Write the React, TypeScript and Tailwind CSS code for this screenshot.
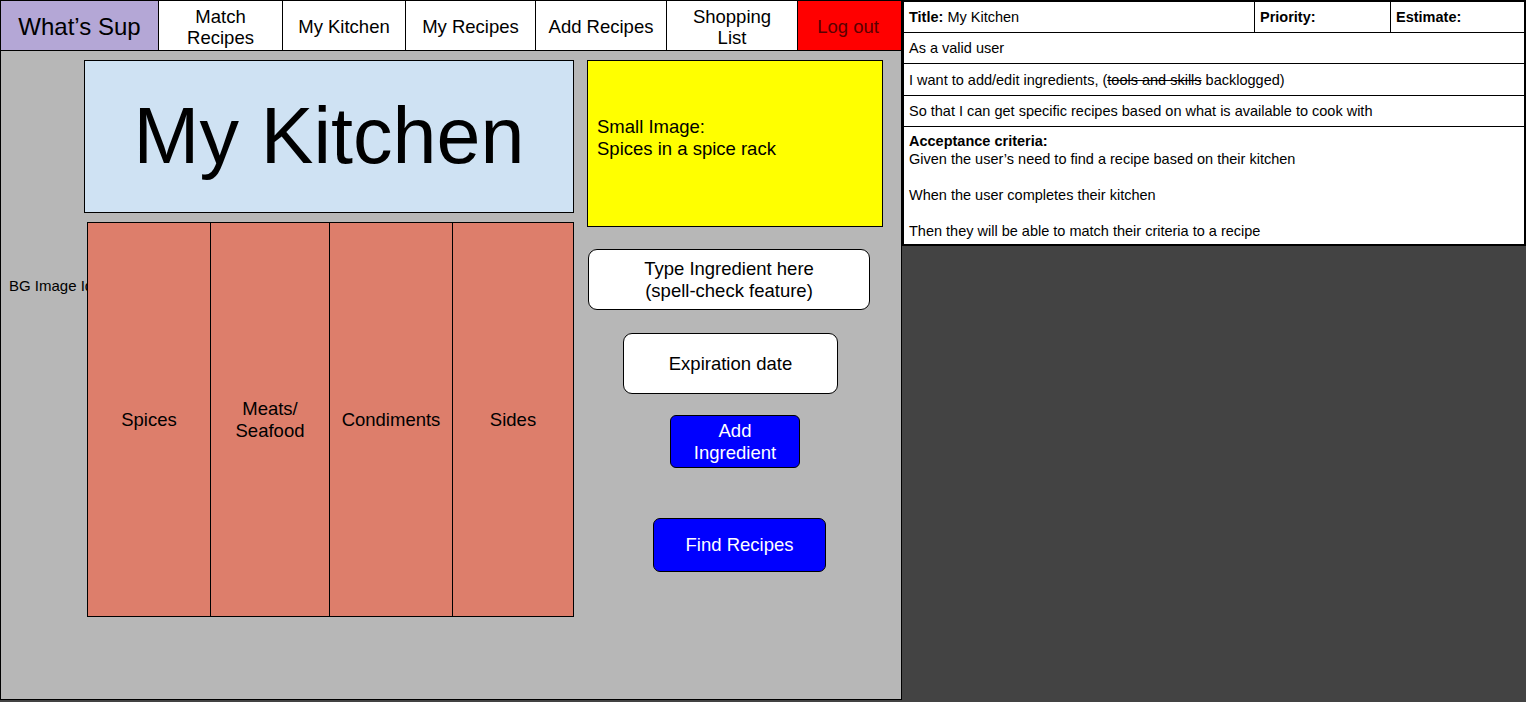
const navItems = [
  { label: "Match\nRecipes", w: "w-[124px]" },
  { label: "My Kitchen", w: "w-[123px]" },
  { label: "My Recipes", w: "w-[130px]" },
  { label: "Add Recipes", w: "w-[131px]" },
  { label: "Shopping\nList", w: "w-[131px]" },
]

const categories = [
  { label: "Spices", w: "w-[122px]" },
  { label: "Meats/\nSeafood", w: "w-[119px] border-l border-black" },
  { label: "Condiments", w: "w-[123px] border-l border-black" },
  { label: "Sides", w: "flex-1 border-l border-black" },
]

function StoryCard() {
  return (
    <div className="w-[624px] self-start bg-white border-2 border-black text-[14.5px] text-black leading-[18px]">
      <div className="flex h-[31px] border-b border-black">
        <div className="w-[351px] flex items-center px-[5px] border-r border-black">
          <span className="font-bold mr-1">Title:</span> My Kitchen
        </div>
        <div className="w-[136px] flex items-center px-[5px] border-r border-black font-bold">Priority:</div>
        <div className="flex-1 flex items-center px-[5px] font-bold">Estimate:</div>
      </div>
      <div className="h-[31px] flex items-center px-[5px] border-b border-black">As a valid user</div>
      <div className="h-[32px] flex items-center px-[5px] border-b border-black">
        I want to add/edit ingredients, (<span className="line-through">tools and skills</span>&nbsp;backlogged)
      </div>
      <div className="h-[31px] flex items-center px-[5px] border-b border-black">
        So that I can get specific recipes based on what is available to cook with
      </div>
      <div className="px-[5px] pt-[5px] pb-[4px]">
        <div className="font-bold">Acceptance criteria:</div>
        <div>Given the user’s need to find a recipe based on their kitchen</div>
        <div className="h-[18px]" />
        <div>When the user completes their kitchen</div>
        <div className="h-[18px]" />
        <div>Then they will be able to match their criteria to a recipe</div>
      </div>
    </div>
  )
}

export default function App() {
  return (
    <div className="w-[1526px] h-[702px] bg-[#434343] flex text-black" style={{ fontFamily: '"Liberation Sans", Arial, sans-serif' }}>
      {/* Wireframe panel */}
      <div className="w-[902px] h-[700px] border border-black bg-[#b7b7b7] flex flex-col">
        <nav className="flex h-[50px] border-b border-black bg-white">
          <div className="w-[158px] bg-[#b4a7d6] border-r border-black flex items-center justify-center pt-[2px] text-[24px]">
            What’s Sup
          </div>
          {navItems.map((item) => (
            <div
              key={item.label}
              className={`${item.w} border-r border-black flex items-center justify-center pt-[2px] text-center text-[18.5px] leading-[21px] whitespace-pre-line`}
            >
              {item.label}
            </div>
          ))}
          <div className="flex-1 bg-[#ff0000] flex items-center justify-center pt-[2px] pr-[3px] text-[18.5px] text-[#5a0000]">
            Log out
          </div>
        </nav>

        <div className="flex">
          {/* Left column */}
          <div className="flex flex-col pt-[9px]">
            <div className="ml-[83px] w-[490px] h-[153px] bg-[#cfe2f3] border border-black flex items-center justify-center pb-[2px] text-[79px] leading-none">
              My Kitchen
            </div>
            <div className="flex mt-[9px]">
              <div className="w-[86px] overflow-hidden whitespace-nowrap pl-[8px] pt-[53px] text-[15px]">
                BG Image Idea
              </div>
              <div className="w-[487px] h-[395px] border border-black bg-[#dd7e6b] flex">
                {categories.map((c) => (
                  <div
                    key={c.label}
                    className={`${c.w} flex items-center justify-center text-center text-[18.5px] leading-[22px] whitespace-pre-line`}
                  >
                    {c.label}
                  </div>
                ))}
              </div>
            </div>
          </div>

          {/* Right column */}
          <div className="ml-[13px] pt-[9px] flex flex-col">
            <div className="w-[296px] h-[167px] bg-[#ffff00] border border-black flex flex-col justify-center pl-[9px] pb-[12px] text-[18.5px] leading-[22px]">
              <div>Small Image:</div>
              <div>Spices in a spice rack</div>
            </div>
            <div className="ml-[1px] mt-[22px] w-[282px] h-[61px] bg-white border border-black rounded-[9px] flex flex-col items-center justify-center text-[18.5px] leading-[22px]">
              <div>Type Ingredient here</div>
              <div>(spell-check feature)</div>
            </div>
            <div className="ml-[36px] mt-[23px] w-[215px] h-[61px] bg-white border border-black rounded-[9px] flex items-center justify-center text-[18.5px]">
              Expiration date
            </div>
            <div className="ml-[83px] mt-[21px] w-[130px] h-[53px] bg-[#0000ff] border border-black rounded-[6px] flex flex-col items-center justify-center text-white text-[18.5px] leading-[22px]">
              <div>Add</div>
              <div>Ingredient</div>
            </div>
            <div className="ml-[66px] mt-[50px] w-[173px] h-[54px] bg-[#0000ff] border border-black rounded-[7px] flex items-center justify-center text-white text-[18.5px]">
              Find Recipes
            </div>
          </div>
        </div>
      </div>

      <StoryCard />
    </div>
  )
}
